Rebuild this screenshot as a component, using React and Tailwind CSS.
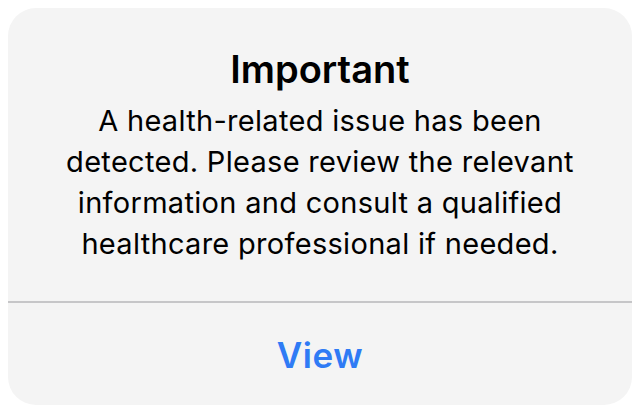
export default function App() {
  return (
    <div className="w-[640px] h-[414px] bg-white p-2" style={{ fontFamily: 'Inter, "Noto Sans", sans-serif' }}>
      <div className="h-[397px] rounded-[28px] bg-[#f4f4f4] flex flex-col overflow-hidden">
        <div className="flex-1 flex flex-col items-center pt-[38px] text-center text-black">
          <h2 className="text-[38px] leading-[46px] font-semibold">Important</h2>
          <p className="mt-[8px] text-[29px] leading-[41px] tracking-[0.3px]">
            A health-related issue has been
            <br />
            detected. Please review the relevant
            <br />
            information and consult a qualified
            <br />
            healthcare professional if needed.
          </p>
        </div>
        <div className="h-[2px] bg-[#c6c6c8]" />
        <button className="h-[102px] flex items-center justify-center text-[35px] font-semibold tracking-[0.6px] text-[#2f7bf5] pt-[2px]">
          View
        </button>
      </div>
    </div>
  );
}
